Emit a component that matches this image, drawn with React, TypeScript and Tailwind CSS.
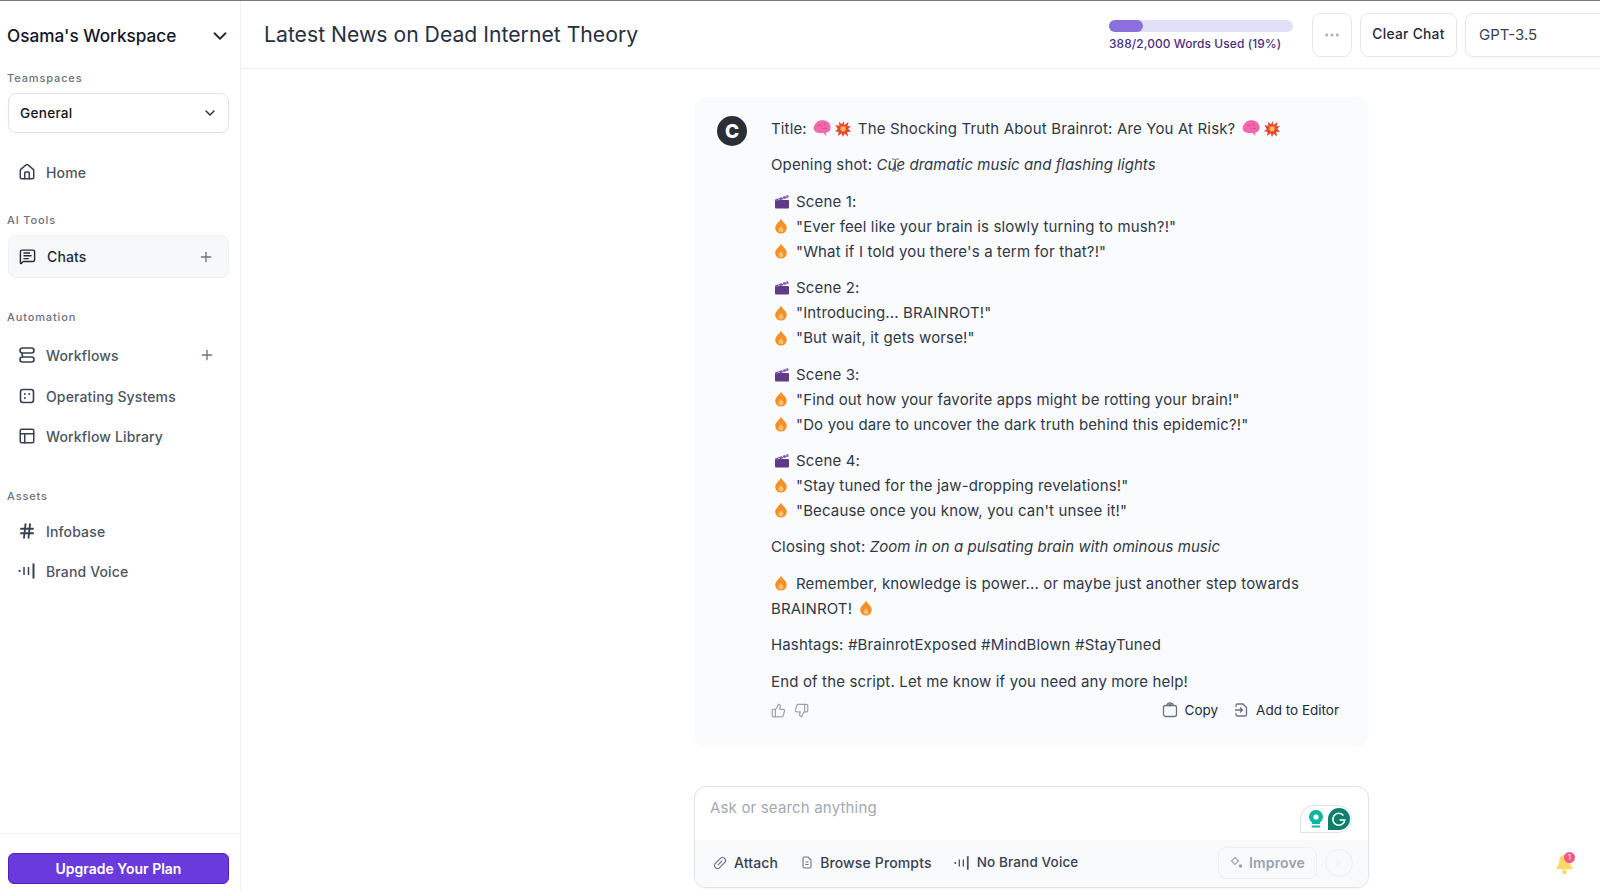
import { ChevronDown, Ellipsis, Hash, House, MessageSquareText, PanelsTopLeft, Plus, ThumbsDown, ThumbsUp } from "lucide-react";
import type { ReactNode } from "react";

const WorkflowIcon = () => (
  <svg width="18" height="18" viewBox="0 0 18 18" fill="none" stroke="currentColor" strokeWidth="1.6">
    <rect x="2" y="2" width="14" height="5" rx="2.5" />
    <rect x="2" y="11" width="14" height="5" rx="2.5" />
    <path d="M4 7c0 2 0 3 1 4" />
  </svg>
);

const SystemsIcon = () => (
  <svg width="18" height="18" viewBox="0 0 18 18" fill="none" stroke="currentColor" strokeWidth="1.6">
    <rect x="2.5" y="2.5" width="13" height="13" rx="2.5" />
    <circle cx="6.8" cy="7" r="1" fill="currentColor" stroke="none" />
    <circle cx="6.8" cy="11" r="1" fill="currentColor" stroke="none" />
    <circle cx="11.2" cy="7" r="1" fill="currentColor" stroke="none" />
  </svg>
);

const VoiceIcon = ({ size = 18 }: { size?: number }) => (
  <svg width={size} height={size} viewBox="0 0 18 18" fill="none" stroke="currentColor">
    <path d="M1.5 8v2" strokeWidth="1.8" />
    <path d="M6 5v8M10.5 5v8" strokeWidth="1.5" />
    <path d="M15.5 1.500v15" strokeWidth="2" />
  </svg>
);

const Flame = ({ className = "" }: { className?: string }) => (
  <svg width="14" height="16" viewBox="0 0 14 16" className={className}>
    <path d="M7 .5c.6 2.600 5.800 5.400 5.800 9.300A5.600 5.700 0 0 1 7 15.500a5.600 5.700 0 0 1-5.800-5.700C1.200 6 6.200 3.400 7 .5z" fill="#f4902c" />
    <path d="M7 8c.4 1.300 2.500 2.300 2.500 4.100A2.500 2.500 0 0 1 7 14.500a2.500 2.500 0 0 1-2.500-2.400C4.500 10.400 6.600 9.300 7 8z" fill="#fbc26a" />
  </svg>
);

const Clapper = () => (
  <svg width="16" height="15" viewBox="0 0 16 15">
    <rect x="1" y="6" width="14" height="8.500" rx="1" fill="#5f3a86" />
    <path d="M1 5.500 14 1l.8 2.500L1.800 7.500z" fill="#7d5aa6" />
    <path d="M4 4.500l1.500 1.500M8 3l1.500 1.500M11.500 2l1.500 1.500" stroke="#e5dcef" strokeWidth="1" />
  </svg>
);

const Brain = () => (
  <svg width="18" height="17" viewBox="0 0 18 17">
    <path d="M4 2C6 0 12-.5 15 2c2.500 2 3.500 6.500 1.500 9-1 1.200-2.500 1.300-3.500 1.500l.5 3.500-3-3C7 13.500 2.500 13 1 10-.3 7 2 3.800 4 2z" fill="#f268ab" />
    <path d="M5 5.500c2-1 3 0 4 1M9 9c2-1 4-1 5 0M11 3c0 1 .5 2 1.500 2.500" stroke="#c93f88" strokeWidth=".8" fill="none" />
  </svg>
);

const Boom = () => (
  <svg width="16" height="16" viewBox="0 0 16 16">
    <path d="M8.500 0l1 4L13.500 1l-1 4.200L16 5l-2.800 2.800L16 11l-3.800-.2.800 4.700-3.500-3L8 16l-1.500-3.800L3 15l.6-4.200L0 10.500 2.800 8 .3 4l4 1L4 .8l3 2.700z" fill="#e8432f" />
    <path d="M8.200 4.500l.8 1.500 2-.6-.8 2 1.400 1.300-2 .4.200 2-1.600-1.200-1.500 1.200-.2-2-2-.5 1.500-1.300-.8-2 2 .7z" fill="#f9c74f" />
  </svg>
);

const SectionLabel = ({ children, className = "" }: { children: ReactNode; className?: string }) => (
  <div className={`pl-[7px] text-[11px] leading-4 font-medium tracking-[0.08em] text-[#6b7280] ${className}`}>{children}</div>
);

const NavItem = ({ icon, label, plus, className = "" }: { icon: ReactNode; label: string; plus?: boolean; className?: string }) => (
  <div className={`ml-2 flex w-[221px] items-center pl-[10px] pr-[14px] text-[#4b5563] ${className}`}>
    <span className="flex w-[28px] shrink-0 text-[#374151]">{icon}</span>
    <span className="flex-1 text-[14px] font-medium tracking-[0.01em]">{label}</span>
    {plus && <Plus size={16} className="text-[#6b7280]" />}
  </div>
);

const Line = ({ emoji, children }: { emoji: ReactNode; children: ReactNode }) => (
  <div className="flex h-[25px] items-center">
    <span className="flex w-[25px] shrink-0 items-center pl-[3px]">{emoji}</span>
    <span>{children}</span>
  </div>
);

const Scene = ({ n, lines }: { n: number; lines: string[] }) => (
  <div className="mb-[11.4px]">
    <Line emoji={<Clapper />}>Scene {n}:</Line>
    {lines.map((l) => (
      <Line key={l} emoji={<Flame />}>{l}</Line>
    ))}
  </div>
);

export default function App() {
  return (
    <div className="flex h-[890px] w-[1600px] overflow-hidden border-t border-[#777] bg-white font-['Inter',sans-serif] text-[#1f2937]">
      {/* Sidebar */}
      <aside className="flex w-[241px] shrink-0 flex-col border-r border-[#eef0f3]">
        <div className="flex h-[69px] items-center justify-between pl-[7px] pr-[9px]">
          <span className="text-[17.2px] font-medium text-[#111827]">Osama's Workspace</span>
          <ChevronDown size={22} className="text-[#1f2937]" />
        </div>
        <SectionLabel>Teamspaces</SectionLabel>
        <div className="mx-2 mt-[7px] flex h-[40px] w-[221px] items-center justify-between rounded-lg border border-[#dfe3e8] pl-[11px] pr-[10px] shadow-[0_1px_2px_rgba(0,0,0,0.03)]">
          <span className="text-[13.6px] font-medium tracking-[0.02em] text-[#111827]">General</span>
          <ChevronDown size={16} className="text-[#1f2937]" />
        </div>
        <NavItem className="mt-[19px] h-10" icon={<House size={18} />} label="Home" />
        <SectionLabel className="mt-[20px]">AI Tools</SectionLabel>
        <div className="mx-2 mt-[7px] flex h-[43px] w-[221px] items-center rounded-lg border border-[#eef1f5] bg-[#f6f8fa] pl-[10px] pr-[14px]">
          <span className="flex w-[28px] text-[#1f2937]"><MessageSquareText size={17} /></span>
          <span className="flex-1 text-[14px] font-medium tracking-[0.01em] text-[#1f2937]">Chats</span>
          <Plus size={16} className="text-[#6b7280]" />
        </div>
        <SectionLabel className="mt-[31px]">Automation</SectionLabel>
        <NavItem className="mt-[9px] h-[42px]" icon={<WorkflowIcon />} label="Workflows" plus />
        <NavItem className="h-10" icon={<SystemsIcon />} label="Operating Systems" />
        <NavItem className="h-10" icon={<PanelsTopLeft size={18} />} label="Workflow Library" />
        <SectionLabel className="mt-[32px]">Assets</SectionLabel>
        <NavItem className="mt-[7px] h-10" icon={<Hash size={18} strokeWidth={2.5} />} label="Infobase" />
        <NavItem className="h-10" icon={<VoiceIcon />} label="Brand Voice" />
        <div className="mt-auto border-t border-[#f0f1f3] px-2 pb-[6px] pt-[19px]">
          <button className="h-[31px] w-[221px] rounded-[6px] border border-[#4c22b8] bg-[#6a3bdc] text-[14px] font-semibold text-white">
            Upgrade Your Plan
          </button>
        </div>
      </aside>

      {/* Main */}
      <main className="relative flex min-w-0 flex-1 flex-col">
        <header className="flex h-[68px] shrink-0 items-center border-b border-[#eef0f3] pl-[23px]">
          <h1 className="w-[845px] shrink-0 text-[21.2px] font-normal text-[#27303f]">Latest News on Dead Internet Theory</h1>
          <div className="w-[203px] shrink-0 pt-[2px]">
            <div className="h-3 w-[184px] rounded-full bg-[#e2e0f8]">
              <div className="h-3 w-[34px] rounded-full bg-[#8b6fdc]" />
            </div>
            <div className="mt-[4px] text-[11.9px] font-medium leading-4 tracking-[0.01em] text-[#4a2d80]">388/2,000 Words Used (19%)</div>
          </div>
          <div className="flex h-[44px] w-[40px] shrink-0 items-center justify-center rounded-lg border border-[#e5e7eb]">
            <Ellipsis size={18} className="text-[#a8aeb8]" />
          </div>
          <div className="ml-2 flex h-[44px] w-[97px] shrink-0 items-center justify-center rounded-lg border border-[#e5e7eb] text-[13.8px] font-medium tracking-[0.02em] text-[#1f2937]">Clear Chat</div>
          <div className="ml-2 flex h-[44px] w-[200px] shrink-0 items-center rounded-lg border border-[#e5e7eb] pl-[13px] pt-[1px] text-[15px] text-[#374151] shadow-[0_1px_3px_rgba(0,0,0,0.04)]">GPT-3.5</div>
        </header>

        <div className="ml-[453px] w-[675px] pt-[28px]">
          <div className="relative flex h-[650px] rounded-xl bg-[#fafbfd] pl-[23px] pr-[30px] pt-[19px]">
            <div className="flex h-[30px] w-[30px] shrink-0 items-center justify-center rounded-full bg-[#2a2f36] text-[19px] font-extrabold leading-none text-white">C</div>
            <div className="ml-[24px] flex-1 text-[15px] leading-[25px] tracking-[0.15px] text-[#2f3846]">
              <div className="mb-[11.4px] flex items-center">
                Title:
                <span className="ml-[6px]"><Brain /></span>
                <span className="ml-[4px]"><Boom /></span>
                <span className="ml-[7px]">The Shocking Truth About Brainrot: Are You At Risk?</span>
                <span className="ml-[7px]"><Brain /></span>
                <span className="ml-[4px]"><Boom /></span>
              </div>
              <div className="mb-[11.4px]">Opening shot: <em className="tracking-[0.05px]">Cue dramatic music and flashing lights</em></div>
              <Scene n={1} lines={['"Ever feel like your brain is slowly turning to mush?!"', `"What if I told you there's a term for that?!"`]} />
              <Scene n={2} lines={['"Introducing... BRAINROT!"', '"But wait, it gets worse!"']} />
              <Scene n={3} lines={['"Find out how your favorite apps might be rotting your brain!"', '"Do you dare to uncover the dark truth behind this epidemic?!"']} />
              <Scene n={4} lines={['"Stay tuned for the jaw-dropping revelations!"', `"Because once you know, you can't unsee it!"`]} />
              <div className="mb-[11.4px]">Closing shot: <em className="tracking-[0.05px]">Zoom in on a pulsating brain with ominous music</em></div>
              <div className="mb-[11.4px]">
                <Line emoji={<Flame />}>Remember, knowledge is power... or maybe just another step towards</Line>
                <div className="flex items-center">BRAINROT!<span className="ml-[7px]"><Flame /></span></div>
              </div>
              <div className="mb-[11.4px]">Hashtags: #BrainrotExposed #MindBlown #StayTuned</div>
              <div>End of the script. Let me know if you need any more help!</div>
              <div className="mt-[4px] flex items-center text-[13.5px] tracking-normal text-[#1f2937]">
                <ThumbsUp size={15} className="text-[#9ca3af]" />
                <ThumbsDown size={15} className="ml-[8px] text-[#9ca3af]" />
                <svg width="16" height="16" viewBox="0 0 16 16" fill="none" stroke="#6b7280" strokeWidth="1.300" className="ml-auto">
                  <rect x="1.500" y="3.500" width="13" height="11" rx="2" />
                  <path d="M5 3.500V3a3 2.200 0 0 1 6 0v.5" />
                  <circle cx="8" cy="2.800" r="1" />
                </svg>
                <span className="ml-[7px]">Copy</span>
                <svg width="16" height="16" viewBox="0 0 16 16" fill="none" stroke="#6b7280" strokeWidth="1.300" className="ml-[15px]">
                  <path d="M3 5V3.500A1.500 1.500 0 0 1 4.500 2H10l3.500 3.500v7A1.500 1.500 0 0 1 12 14H4.500A1.500 1.500 0 0 1 3 12.500V11" />
                  <path d="M2 8h7M7 5.500 9.500 8 7 10.500" />
                </svg>
                <span className="ml-[7px]">Add to Editor</span>
              </div>
            </div>
            {/* text cursor over the message */}
            <svg width="9" height="14" viewBox="0 0 9 14" fill="none" stroke="#5f6978" className="absolute left-[197px] top-[61px]">
              <path d="M1 1h2.500l1 1 1-1H8M4.500 2v10M1 13h2.500l1-1 1 1H8" />
            </svg>
          </div>

          <div className="relative mt-[39px] h-[102px] overflow-hidden rounded-xl border border-[#dfe2e7] bg-white shadow-[0_1px_2px_rgba(0,0,0,0.04)]">
            <div className="h-[53px] pl-[15px] pt-[9px] text-[15px] leading-6 tracking-[0.17px] text-[#a3a9b3]">Ask or search anything</div>
            <div className="flex h-[48px] items-center bg-[#f9fafb] pb-[3px] pl-[18px] pr-[15px] text-[14px] font-medium tracking-[0.01em] text-[#374151]">
              <svg width="14" height="14" viewBox="0 0 14 14" fill="none" stroke="#6b7280" strokeWidth="1.200">
                <g transform="rotate(45 7 7)">
                  <rect x="4" y="0.500" width="6" height="13" rx="3" />
                  <path d="M7 4v6" />
                </g>
              </svg>
              <span className="ml-[7px]">Attach</span>
              <svg width="12" height="13" viewBox="0 0 12 13" fill="none" stroke="#6b7280" strokeWidth="1.100" className="ml-[23px]">
                <path d="M3 1h4l3 3v6.500A1.500 1.500 0 0 1 8.500 12h-5A1.500 1.500 0 0 1 2 10.500v-8A1.500 1.500 0 0 1 3 1z" />
                <path d="M4.500 6h3M4.500 8.500h3" />
              </svg>
              <span className="ml-[7px]">Browse Prompts</span>
              <span className="ml-[22px] text-[#4b5563]"><VoiceIcon size={16} /></span>
              <span className="ml-[7px] text-[13.5px]">No Brand Voice</span>
              <div className="ml-auto flex h-[32px] w-[99px] items-center justify-center rounded-lg border border-[#eceef1] text-[#9aa2ae]">
                <svg width="13" height="13" viewBox="0 0 13 13" fill="none" stroke="#9aa2ae" strokeWidth="1.200">
                  <path d="M5 1.500 8.500 5 5 8.500 1.500 5z" />
                  <circle cx="10.500" cy="10" r="1.200" fill="#9aa2ae" />
                </svg>
                <span className="ml-[6px] font-semibold">Improve</span>
              </div>
              <div className="ml-[8px] flex h-[28px] w-[28px] items-center justify-center rounded-full border border-[#eceef1]">
                <svg width="10" height="10" viewBox="0 0 10 10"><path d="M2 1l7 4-7 4z" fill="#f3f4f6" /></svg>
              </div>
            </div>
            {/* grammarly badge */}
            <div className="absolute bottom-[54px] right-[16px] flex h-[28px] w-[52px] items-center justify-end gap-[4px] rounded-t-[14px] rounded-br-[14px] border border-[#dfe2e7] bg-white pr-[1px]">
              <svg width="16" height="20" viewBox="0 0 16 20">
                <path d="M8 1a7 7 0 0 1 4 12.700V15H4v-1.300A7 7 0 0 1 8 1z" fill="#12b5a0" />
                <path d="M4.500 17.500h7" stroke="#12b5a0" strokeWidth="2" strokeLinecap="round" />
                <circle cx="8" cy="8" r="2.600" fill="#fff" />
              </svg>
              <svg width="22" height="22" viewBox="0 0 22 22" fill="none">
                <path d="M11 0a11 11 0 1 1 0 22H0V11A11 11 0 0 1 11 0z" fill="#0d7f6b" />
                <path d="M15.500 7.500a6 6 0 1 0 1.300 4.500H11.500" stroke="#fff" strokeWidth="1.600" />
              </svg>
            </div>
          </div>
        </div>

        {/* notification bell */}
        <div className="absolute bottom-[14px] right-[21px] h-[26px] w-[24px]">
          <svg width="19" height="23" viewBox="0 0 20 22" className="absolute bottom-0 left-0">
            <path d="M10 1c4 0 5.500 3 5.500 7 0 4 3.500 6 3.500 8H1c0-2 3.500-4 3.500-8 0-4 1.500-7 5.500-7z" fill="#fbd968" />
            <circle cx="10" cy="19" r="2.500" fill="#fbd968" />
          </svg>
          <span className="absolute right-[4px] top-[2px] flex h-[11px] w-[11px] items-center justify-center rounded-full bg-[#ef5a86] text-[7px] leading-none text-white">1</span>
        </div>
      </main>
    </div>
  );
}
